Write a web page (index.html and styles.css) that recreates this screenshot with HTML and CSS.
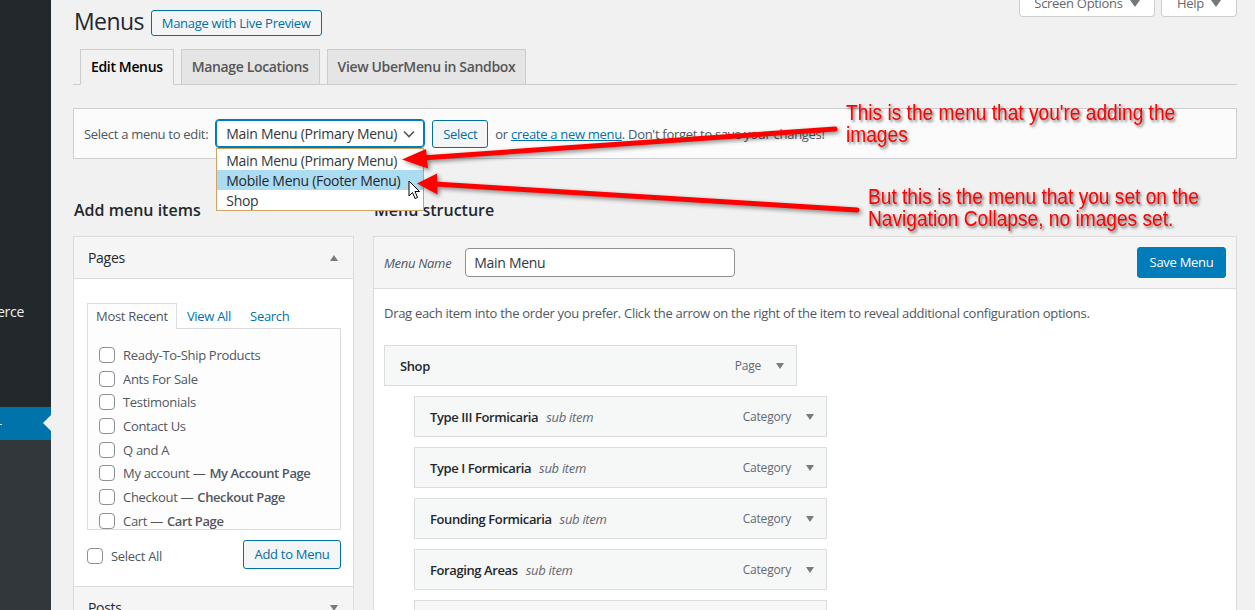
FILE: index.html
```html
<!DOCTYPE html>
<html>
<head>
<meta charset="utf-8">
<title>Menus</title>
<link rel="stylesheet" href="styles.css">
</head>
<body>
<div class="wp">
  <aside class="adminmenu">
    <div class="am-item am-woo"><span>WooCommerce</span></div>
    <div class="am-item am-current"><span class="am-dash"></span><span class="am-arrow"></span></div>
    <div class="am-sub"></div>
  </aside>
  <main class="content">
    <div class="head">
      <h1 class="title">Menus</h1>
      <a class="btn btn-outline btn-live">Manage with Live Preview</a>
      <div class="screen-meta">
        <div class="meta-tab meta-screen">Screen Options <span class="caret"></span></div>
        <div class="meta-tab meta-help">Help <span class="caret"></span></div>
      </div>
    </div>

    <nav class="nav-tabs">
      <a class="nav-tab active">Edit Menus</a>
      <a class="nav-tab">Manage Locations</a>
      <a class="nav-tab">View UberMenu in Sandbox</a>
    </nav>

    <div class="manage-menus">
      <span class="mm-label">Select a menu to edit:</span>
      <div class="select-wrap">
        <div class="select">
          <span>Main Menu (Primary Menu)</span>
          <svg class="chev" width="12" height="8" viewBox="0 0 12 8"><polyline points="1,1.5 6,6.5 11,1.5" fill="none" stroke="#50575e" stroke-width="1.6"/></svg>
        </div>
        <ul class="dropdown">
          <li>Main Menu (Primary Menu)</li>
          <li class="hl">Mobile Menu (Footer Menu)</li>
          <li>Shop</li>
        </ul>
      </div>
      <a class="btn btn-select">Select</a>
      <span class="mm-text">or <a class="link">create a new menu</a>. Don't forget to save your changes!</span>
    </div>

    <div class="cols">
      <section class="col-left">
        <h2 class="col-title">Add menu items</h2>
        <div class="accordion">
          <div class="acc-section">
            <div class="acc-title">Pages <span class="tri-up"></span></div>
            <div class="acc-body">
              <div class="tabs">
                <span class="tab tab-active">Most Recent</span>
                <span class="tab">View All</span>
                <span class="tab">Search</span>
              </div>
              <div class="panel">
                <label class="row"><span class="cb"></span>Ready-To-Ship Products</label>
                <label class="row"><span class="cb"></span>Ants For Sale</label>
                <label class="row"><span class="cb"></span>Testimonials</label>
                <label class="row"><span class="cb"></span>Contact Us</label>
                <label class="row"><span class="cb"></span>Q and A</label>
                <label class="row"><span class="cb"></span>My account — <span class="post-state">My Account Page</span></label>
                <label class="row"><span class="cb"></span>Checkout — <span class="post-state">Checkout Page</span></label>
                <label class="row"><span class="cb"></span>Cart — <span class="post-state">Cart Page</span></label>
              </div>
              <div class="acc-actions">
                <label class="row select-all"><span class="cb"></span>Select All</label>
                <a class="btn btn-outline btn-add">Add to Menu</a>
              </div>
            </div>
          </div>
          <div class="acc-section">
            <div class="acc-title">Posts <span class="tri-down"></span></div>
          </div>
        </div>
      </section>

      <section class="col-right">
        <h2 class="col-title">Menu structure</h2>
        <div class="menu-edit">
          <div class="me-header">
            <label class="me-label">Menu Name</label>
            <div class="me-input">Main Menu</div>
            <a class="btn btn-primary">Save Menu</a>
          </div>
          <div class="me-body">
            <p class="me-desc">Drag each item into the order you prefer. Click the arrow on the right of the item to reveal additional configuration options.</p>
            <div class="menu-item"><span class="mi-title">Shop</span><span class="mi-type">Page</span><span class="mi-arrow"></span></div>
            <div class="menu-item sub"><span class="mi-title">Type III Formicaria</span><span class="mi-sub">sub item</span><span class="mi-type">Category</span><span class="mi-arrow"></span></div>
            <div class="menu-item sub"><span class="mi-title">Type I Formicaria</span><span class="mi-sub">sub item</span><span class="mi-type">Category</span><span class="mi-arrow"></span></div>
            <div class="menu-item sub"><span class="mi-title">Founding Formicaria</span><span class="mi-sub">sub item</span><span class="mi-type">Category</span><span class="mi-arrow"></span></div>
            <div class="menu-item sub"><span class="mi-title">Foraging Areas</span><span class="mi-sub">sub item</span><span class="mi-type">Category</span><span class="mi-arrow"></span></div>
            <div class="menu-item sub"><span class="mi-title">&nbsp;</span></div>
          </div>
        </div>
      </section>
    </div>
  </main>
</div>

<div class="overlay">
  <svg class="arrows" width="1255" height="610" viewBox="0 0 1255 610">
    <g class="arrow-g">
      <line x1="835" y1="129" x2="422" y2="158" stroke="#ff0000" stroke-width="5" stroke-linecap="round"/>
      <polygon points="402,159.5 426,149 428,168.5" fill="#ff0000"/>
      <line x1="857" y1="210" x2="435" y2="184" stroke="#ff0000" stroke-width="5" stroke-linecap="round"/>
      <polygon points="417,183.5 437,173.5 437.5,194.5" fill="#ff0000"/>
    </g>
  </svg>
  <div class="note note1"><div class="note-line">This is the menu that you're adding the</div><div class="note-line">images</div></div>
  <div class="note note2"><div class="note-line">But this is the menu that you set on the</div><div class="note-line">Navigation Collapse, no images set.</div></div>
  <svg class="cursor" width="14" height="21" viewBox="0 0 14 21">
    <path d="M1,1 L1,16 L4.5,12.5 L7,18.5 L9.5,17.5 L7,11.5 L11.5,11.5 Z" fill="#fff" stroke="#000" stroke-width="1" stroke-linejoin="round"/>
  </svg>
</div>
</body>
</html>
```

FILE: styles.css
```css
* { box-sizing: border-box; }
html, body { margin: 0; padding: 0; }
body {
  width: 1255px;
  height: 610px;
  overflow: hidden;
  font-family: "Open Sans", "Noto Sans", "Liberation Sans", sans-serif;
  font-size: 13px;
  letter-spacing: -0.3px;
  color: #32373c;
  background: #f1f1f1;
  position: relative;
}
a { text-decoration: none; }

.wp { display: flex; height: 610px; }

/* admin menu */
.adminmenu {
  width: 51px;
  flex: none;
  background: #23282d;
  display: flex;
  flex-direction: column;
  overflow: hidden;
}
.am-item { height: 34px; position: relative; }
.am-woo {
  margin-top: 294px;
  display: flex;
  justify-content: flex-end;
  align-items: center;
  padding-right: 27px;
  white-space: nowrap;
  overflow: hidden;
  color: #f0f0f1;
  font-size: 14px;
}
.am-current {
  margin-top: 79px;
  height: 33px;
  background: #0073aa;
}
.am-dash {
  position: absolute;
  left: 0;
  top: 17px;
  width: 2px;
  height: 1px;
  background: #cfe6f2;
}
.am-arrow {
  position: absolute;
  right: 0;
  top: 8px;
  width: 0;
  height: 0;
  border-top: 8px solid transparent;
  border-bottom: 8px solid transparent;
  border-right: 8px solid #f1f1f1;
}
.am-sub { flex: 1; background: #32373c; }

/* content */
.content {
  flex: 1;
  min-width: 0;
  padding: 0 18px 0 22px;
  background: #f1f1f1;
}
.head { display: flex; align-items: flex-start; }
.title {
  margin: 7px 0 0 1px;
  font-size: 23px;
  line-height: 29px;
  font-weight: 400;
  letter-spacing: -0.6px;
  color: #23282d;
}
.btn {
  display: inline-block;
  border: 1px solid #0071a1;
  border-radius: 3px;
  font-size: 13px;
  white-space: nowrap;
  text-align: center;
}
.btn-outline { color: #0071a1; background: #f3f5f6; }
.btn-live {
  margin: 10px 0 0 7px;
  height: 26px;
  line-height: 24px;
  padding: 0 10px;
}
.screen-meta {
  margin-left: auto;
  display: flex;
  gap: 6px;
}
.meta-tab {
  margin-top: -10px;
  height: 27px;
  background: #fff;
  border: 1px solid #ccd0d4;
  border-top: none;
  border-radius: 0 0 4px 4px;
  color: #646970;
  font-size: 13px;
  padding: 0 12px;
  display: flex;
  align-items: center;
  justify-content: center;
  gap: 7px;
  white-space: nowrap;
}
.meta-screen { width: 136px; }
.meta-help { width: 76px; }
.caret {
  width: 0; height: 0;
  border-left: 5px solid transparent;
  border-right: 5px solid transparent;
  border-top: 7px solid #72777c;
}

/* nav tabs */
.nav-tabs {
  margin-top: 13px;
  display: flex;
  gap: 7px;
  padding-left: 7px;
  border-bottom: 1px solid #ccc;
  height: 36px;
}
.nav-tab {
  height: 35px;
  padding: 0 10px;
  line-height: 34px;
  font-size: 14px;
  font-weight: 600;
  letter-spacing: -0.35px;
  color: #555;
  background: #e5e5e5;
  border: 1px solid #ccc;
  border-bottom: none;
}
.nav-tab.active {
  background: #f1f1f1;
  color: #000;
  height: 36px;
  border-bottom: 1px solid #f1f1f1;
}

/* manage menus */
.manage-menus {
  margin-top: 23px;
  height: 51px;
  border: 1px solid #ccd0d4;
  background: #fbfbfb;
  padding: 0 10px;
  display: flex;
  align-items: center;
}
.mm-label { color: #50575e; }
.select-wrap { position: relative; margin-left: 7px; }
.select {
  width: 210px;
  height: 29px;
  border: 1px solid #007cba;
  box-shadow: inset 0 0 0 1px #007cba;
  border-radius: 4px;
  background: #fff;
  display: flex;
  align-items: center;
  padding: 0 9px 0 10px;
  font-size: 14px;
  color: #32373c;
}
.select span { flex: 1; white-space: nowrap; }
.chev { flex: none; }
.dropdown {
  position: absolute;
  left: 1px;
  top: 29px;
  width: 208px;
  margin: 0;
  padding: 1px 0 0;
  list-style: none;
  background: #fff;
  border: 1px solid #d0a360;
  z-index: 5;
}
.dropdown li {
  height: 20px;
  line-height: 21px;
  padding-left: 9px;
  font-size: 14px;
  color: #32373c;
  white-space: nowrap;
}
.dropdown li.hl { background: #acdcf2; color: #23282d; }
.btn-select {
  margin-left: 7px;
  width: 56px;
  height: 28px;
  line-height: 26px;
  color: #0071a1;
  background: #f3f5f6;
}
.mm-text { margin-left: 7px; color: #50575e; white-space: nowrap; }
.link { color: #0073aa; text-decoration: underline; }

/* columns */
.cols { display: flex; gap: 19px; }
.col-left { width: 281px; flex: none; }
.col-right { flex: 1; min-width: 0; }
.col-title {
  margin: 40px 0 15px 1px;
  font-size: 16px;
  line-height: 22px;
  font-weight: 600;
  letter-spacing: 0;
  color: #23282d;
}

/* accordion */
.accordion {
  border: 1px solid #dcdcde;
  background: #fff;
}
.acc-section + .acc-section { border-top: 1px solid #dcdcde; }
.acc-title {
  height: 42px;
  padding: 0 14px;
  display: flex;
  align-items: center;
  justify-content: space-between;
  font-size: 14px;
  color: #23282d;
  background: #f5f5f5;
  border-bottom: 1px solid #dcdcde;
}
.tri-up, .tri-down {
  width: 0; height: 0;
  border-left: 4.5px solid transparent;
  border-right: 4.5px solid transparent;
  margin-right: 1px;
}
.tri-up { border-bottom: 6px solid #787c82; }
.tri-down { border-top: 6px solid #787c82; }
.acc-body { padding: 24px 12px 17px 13px; }
.tabs { display: flex; height: 25px; position: relative; z-index: 1; }
.tab {
  height: 25px;
  line-height: 24px;
  padding: 0 8px;
  color: #0073aa;
  border: 1px solid transparent;
  border-bottom: none;
}
.tab + .tab { margin-left: 1px; }
.tab-active {
  color: #50575e;
  background: #fdfdfd;
  border-color: #dcdcde;
  height: 26px;
}
.panel {
  height: 202px;
  border: 1px solid #dcdcde;
  background: #fdfdfd;
  padding: 14px 0 0 11px;
  overflow: hidden;
}
.row {
  display: flex;
  align-items: center;
  height: 23.7px;
  color: #50575e;
  white-space: nowrap;
}
.post-state { color: #50575e; font-weight: 600; letter-spacing: -0.4px; margin-left: 4px; }
.cb {
  width: 16px;
  height: 16px;
  border: 1px solid #8c8f94;
  border-radius: 4px;
  background: #fff;
  margin-right: 8px;
  flex: none;
}
.acc-actions {
  margin-top: 10px;
  display: flex;
  align-items: center;
  justify-content: space-between;
  height: 29px;
}
.select-all { margin-top: 3px; }
.btn-add {
  height: 29px;
  line-height: 27px;
  padding: 0 10px;
  width: 98px;
}

/* menu editor */
.menu-edit {
  border: 1px solid #dcdcde;
  background: #fff;
  height: 400px;
}
.me-header {
  height: 52px;
  background: #f5f5f5;
  border-bottom: 1px solid #dcdcde;
  display: flex;
  align-items: center;
  padding: 0 10px;
}
.me-label { font-style: italic; color: #50575e; margin-right: 14px; }
.me-input {
  width: 270px;
  height: 29px;
  border: 1px solid #8c8f94;
  border-radius: 4px;
  background: #fff;
  padding: 0 8px;
  line-height: 27px;
  font-size: 14px;
  color: #32373c;
}
.btn-primary {
  margin-left: auto;
  width: 89px;
  height: 31px;
  line-height: 29px;
  background: #007cba;
  border-color: #007cba;
  color: #fff;
}
.me-body { padding: 14px 10px 0; }
.me-desc { margin: 0 0 22px; line-height: 20px; color: #50575e; }
.menu-item {
  width: 413px;
  height: 41px;
  margin-bottom: 10px;
  background: #f6f7f7;
  border: 1px solid #dcdcde;
  display: flex;
  align-items: center;
  padding: 0 12px 0 15px;
}
.menu-item.sub { margin-left: 30px; }
.mi-title { font-weight: 600; letter-spacing: -0.4px; color: #23282d; }
.mi-sub { font-style: italic; color: #646970; margin-left: 8px; }
.mi-type { margin-left: auto; font-size: 12px; letter-spacing: -0.2px; color: #646970; }
.mi-arrow {
  margin-left: 15px;
  width: 0; height: 0;
  border-left: 4.5px solid transparent;
  border-right: 4.5px solid transparent;
  border-top: 6px solid #787c82;
}

/* overlay annotations */
.overlay {
  position: absolute;
  left: 0;
  top: 0;
  width: 1255px;
  height: 610px;
  pointer-events: none;
  z-index: 10;
}
.arrows { position: absolute; left: 0; top: 0; }
.arrow-g { filter: drop-shadow(2px 2px 2px rgba(0,0,0,0.45)); }
.note {
  position: absolute;
  font-family: "Liberation Sans", Arial, sans-serif;
  font-size: 22px;
  letter-spacing: 0;
  color: #ff0000;
  white-space: nowrap;
  transform: scaleX(0.87);
  transform-origin: left top;
  text-shadow: 2px 2px 3px rgba(0,0,0,0.55);
}
.note-line { height: 22px; line-height: 22px; }
.note1 { left: 846px; top: 102px; }
.note2 { left: 868px; top: 186px; }
.cursor { position: absolute; left: 408px; top: 180px; }
```
